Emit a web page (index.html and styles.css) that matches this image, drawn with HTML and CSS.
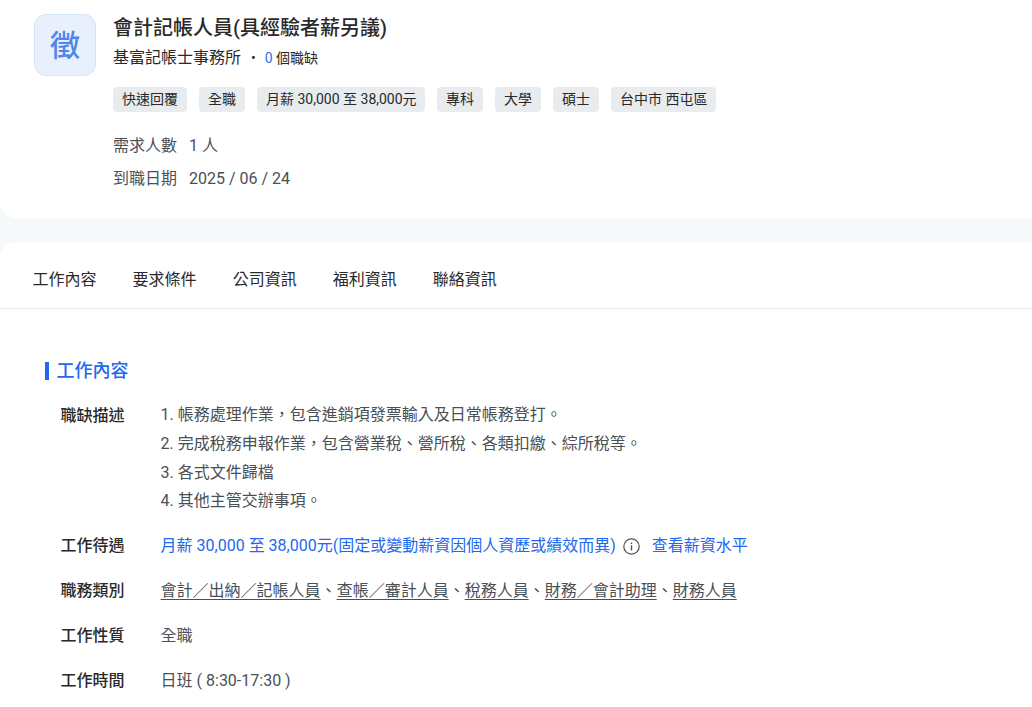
FILE: index.html
```html
<!DOCTYPE html>
<html lang="zh-Hant">
<head>
<meta charset="utf-8">
<title>會計記帳人員</title>
<link rel="stylesheet" href="styles.css">
</head>
<body>
<header class="head-card">
  <div class="logo">徵</div>
  <div class="head-main">
    <h1 class="job-title">會計記帳人員(具經驗者薪另議)</h1>
    <div class="company"><span>基富記帳士事務所</span><span class="dot">•</span><span class="vacancy"><b class="num">0</b> 個職缺</span></div>
    <div class="tags">
      <span class="tag">快速回覆</span><span class="tag">全職</span><span class="tag tag-salary">月薪 30,000 至 38,000元</span><span class="tag">專科</span><span class="tag">大學</span><span class="tag">碩士</span><span class="tag">台中市 西屯區</span>
    </div>
    <div class="facts">
      <div class="fact"><span class="fact-k">需求人數</span><span>1 人</span></div>
      <div class="fact"><span class="fact-k">到職日期</span><span>2025 / 06 / 24</span></div>
    </div>
  </div>
</header>
<main class="body-card">
  <nav class="tabs">
    <a class="tab">工作內容</a><a class="tab">要求條件</a><a class="tab">公司資訊</a><a class="tab">福利資訊</a><a class="tab">聯絡資訊</a>
  </nav>
  <section class="section">
    <h2 class="section-title">工作內容</h2>
    <div class="row first">
      <div class="label">職缺描述</div>
      <div class="value desc">1. 帳務處理作業，包含進銷項發票輸入及日常帳務登打。<br>2. 完成稅務申報作業，包含營業稅、營所稅、各類扣繳、綜所稅等。<br>3. 各式文件歸檔<br>4. 其他主管交辦事項。</div>
    </div>
    <div class="row">
      <div class="label">工作待遇</div>
      <div class="value blue">月薪 30,000 至 38,000元(固定或變動薪資因個人資歷或績效而異)
        <svg class="info" width="17" height="17" viewBox="0 0 17 17" fill="none"><circle cx="8.5" cy="8.5" r="7.7" stroke="#4a5057" stroke-width="1.2"/><rect x="7.8" y="7.4" width="1.4" height="5" fill="#4a5057"/><rect x="7.8" y="4.5" width="1.4" height="1.6" fill="#4a5057"/></svg>
        <a class="level">查看薪資水平</a></div>
    </div>
    <div class="row">
      <div class="label">職務類別</div>
      <div class="value"><a class="ul">會計／出納／記帳人員</a>、<a class="ul">查帳／審計人員</a>、<a class="ul">稅務人員</a>、<a class="ul">財務／會計助理</a>、<a class="ul">財務人員</a></div>
    </div>
    <div class="row">
      <div class="label">工作性質</div>
      <div class="value">全職</div>
    </div>
    <div class="row">
      <div class="label">工作時間</div>
      <div class="value">日班 ( 8:30-17:30 )</div>
    </div>
  </section>
</main>
</body>
</html>
```
FILE: styles.css
```css
* { box-sizing: border-box; }
html, body { margin: 0; height: 707px; overflow: hidden; }
body {
  background: #f5f9fa;
  font-family: Roboto, "Noto Sans CJK TC", sans-serif;
  font-size: 16px;
  color: #292929;
}
.head-card {
  display: flex;
  height: 218px;
  padding: 14px 0 0 34px;
  background: #fff;
  border-radius: 0 0 0 16px;
}
.logo {
  width: 62px;
  height: 62px;
  display: flex;
  align-items: center;
  justify-content: center;
  flex: none;
  background: #e8effd;
  border: 1px solid #d5e2fb;
  border-radius: 12px;
  padding-top: 1px;
  color: #4d86ec;
  font-size: 30px;
  font-weight: 500;
  line-height: 1;
}
.head-main { margin-left: 17px; }
.job-title {
  margin: 0;
  font-size: 20px;
  font-weight: 500;
  line-height: 28px;
  color: #292929;
}
.company {
  display: flex;
  align-items: center;
  margin-top: 1px;
  height: 30px;
  line-height: 30px;
}
.dot { margin: 0 9px 0 10px; font-size: 14px; color: #292929; }
.vacancy { font-size: 14px; color: #292929; }
.num { font-weight: 400; color: #2f6fed; }
.tags {
  display: flex;
  gap: 12px;
  margin-top: 14px;
}
.tag {
  height: 25px;
  padding: 0 9px;
  background: #e8ecef;
  border-radius: 4px;
  font-size: 14px;
  line-height: 25px;
  color: #292929;
}
.tag-salary { padding-right: 8.4px; }
.facts { margin-top: 17px; color: #4a5057; }
.fact { display: flex; height: 33px; line-height: 33px; }
.fact-k { width: 76px; }
.body-card {
  height: 480px;
  margin-top: 24px;
  background: #fff;
  border-radius: 16px 0 0 0;
}
.tabs {
  display: flex;
  gap: 36px;
  height: 67px;
  padding-left: 32.6px;
  border-bottom: 1px solid #e8e8e8;
}
.tab { line-height: 75px; color: #292929; }
.section { padding: 53px 0 0 45px; }
.section-title {
  margin: 0;
  height: 18px;
  padding-left: 7.5px;
  border-left: 4px solid #2268ee;
  font-size: 18px;
  font-weight: 500;
  line-height: 18px;
  color: #2268ee;
}
.row {
  display: flex;
  margin-top: 15px;
  line-height: 30px;
}
.row.first { margin-top: 21px; }
.label {
  width: 115.6px;
  flex: none;
  padding-left: 15.6px;
  font-weight: 500;
  color: #292929;
}
.value { color: #4a5057; white-space: nowrap; }
.desc { line-height: 28.8px; }
.blue { color: #2268ee; }
.info { vertical-align: -4px; margin: 0 0 0 3.5px; }
.level { margin-left: 7.5px; }
.ul { text-decoration: underline; text-underline-offset: 3px; }
```
